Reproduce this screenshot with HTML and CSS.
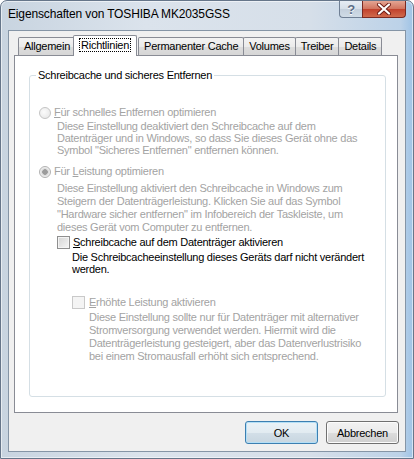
FILE: index.html
```html
<!DOCTYPE html>
<html lang="de">
  <head>
    <meta charset="UTF-8" />
    <meta name="viewport" content="width=device-width, initial-scale=1.0" />
    <title>Eigenschaften von TOSHIBA MK2035GSS</title>

    <link rel="stylesheet" href="styles.css">
  </head>
  <body>
    <div class="window">
      <div class="titlebar">
        <span class="title">Eigenschaften von TOSHIBA MK2035GSS</span>
        <div class="caption-buttons">
          <span class="cap-btn help">?</span>
          <span class="cap-btn close">
            <svg width="16" height="12" viewBox="0 0 16 12">
              <path d="M3 1.5 L13 10.5 M13 1.5 L3 10.5" stroke="#6b1b14" stroke-width="4" stroke-linecap="round" />
              <path d="M3 1.5 L13 10.5 M13 1.5 L3 10.5" stroke="#fff" stroke-width="2.2" stroke-linecap="round" />
            </svg>
          </span>
        </div>
      </div>

      <div class="client">
        <div class="tabs">
          <span class="tab">Allgemein</span>
          <span class="tab active"><span class="focus">Richtlinien</span></span>
          <span class="tab">Permanenter Cache</span>
          <span class="tab">Volumes</span>
          <span class="tab">Treiber</span>
          <span class="tab">Details</span>
        </div>

        <div class="panel">
          <fieldset class="group">
            <legend>Schreibcache und sicheres Entfernen</legend>

            <div class="row disabled row-first">
              <span class="radio"></span>
              <span><u>F</u>ür schnelles Entfernen optimieren</span>
            </div>
            <p class="desc disabled desc-first">
              Diese Einstellung deaktiviert den Schreibcache auf dem<br>
              Datenträger und in Windows, so dass Sie dieses Gerät ohne das<br>
              Symbol "Sicheres Entfernen" entfernen können.
            </p>

            <div class="row disabled row-second">
              <span class="radio checked"></span>
              <span>Für <u>L</u>eistung optimieren</span>
            </div>
            <p class="desc disabled desc-second">
              Diese Einstellung aktiviert den Schreibcache in Windows zum<br>
              Steigern der Datenträgerleistung. Klicken Sie auf das Symbol<br>
              "Hardware sicher entfernen" im Infobereich der Taskleiste, um<br>
              dieses Gerät vom Computer zu entfernen.
            </p>

            <div class="row row-check">
              <span class="check"></span>
              <span><u>S</u>chreibcache auf dem Datenträger aktivieren</span>
            </div>
            <p class="desc desc-check">
              Die Schreibcacheeinstellung dieses Geräts darf nicht verändert<br>
              werden.
            </p>

            <div class="row disabled row-boost">
              <span class="check"></span>
              <span><u>E</u>rhöhte Leistung aktivieren</span>
            </div>
            <p class="desc disabled desc-boost">
              Diese Einstellung sollte nur für Datenträger mit alternativer<br>
              Stromversorgung verwendet werden. Hiermit wird die<br>
              Datenträgerleistung gesteigert, aber das Datenverlustrisiko<br>
              bei einem Stromausfall erhöht sich entsprechend.
            </p>
          </fieldset>
        </div>

        <div class="buttons">
          <button class="btn default">OK</button>
          <button class="btn">Abbrechen</button>
        </div>
      </div>
    </div>
  </body>
</html>
```

FILE: styles.css
```css
html,
body {
  margin: 0;
  padding: 0;
  background: #fff;
}

body {
  font-family: "Liberation Sans", Arial, sans-serif;
  font-size: 11px;
  letter-spacing: -0.25px;
  color: #000;
}

.window {
  width: 414px;
  height: 459px;
  box-sizing: border-box;
  border: 1px solid #66768a;
  border-radius: 7px 7px 0 0;
  padding: 0 7px 6px 7px;
  display: flex;
  flex-direction: column;
  background: linear-gradient(to right, #c8d4e0 0%, #dbe3ec 35%, #d6dfe9 75%, #bcd2e8 97%, #9fc3e6 100%);
  box-shadow: inset 0 0 0 1px rgba(255, 255, 255, 0.55);
}

.titlebar {
  height: 29px;
  display: flex;
  justify-content: space-between;
  align-items: flex-start;
}

.title {
  margin-top: 6px;
  font-size: 12px;
  line-height: 14px;
  letter-spacing: -0.15px;
  color: #000;
}

.caption-buttons {
  display: flex;
}

.cap-btn {
  height: 17px;
  box-sizing: border-box;
  display: flex;
  align-items: center;
  justify-content: center;
  border: 1px solid #6f7f94;
  border-top: none;
}

.help {
  width: 23px;
  border-right: none;
  border-radius: 0 0 0 4px;
  background: linear-gradient(#e6ecf3 0%, #d5dee8 50%, #c3cfdc 51%, #d0dbe6 100%);
  color: #5a6d86;
  font-size: 13px;
  font-weight: bold;
  text-shadow: 0 1px 0 #fff;
}

.close {
  width: 44px;
  border-color: #7a2a22;
  border-radius: 0 0 4px 0;
  background: linear-gradient(#e4a593 0%, #d1735d 50%, #c1412c 51%, #d06a4c 100%);
}

.client {
  flex: 1;
  display: flex;
  flex-direction: column;
  border: 1px solid #8595a6;
  background: #f0f0f0;
}

.tabs {
  height: 24px;
  box-sizing: border-box;
  display: flex;
  align-items: flex-end;
  padding-left: 9px;
}

.tab {
  height: 18px;
  box-sizing: border-box;
  padding: 0 5px;
  line-height: 16px;
  white-space: nowrap;
  border: 1px solid #898c95;
  border-bottom: none;
  border-radius: 2px 2px 0 0;
  margin-right: -1px;
  background: linear-gradient(#f3f3f3 0%, #ebebeb 50%, #dddddd 51%, #d6d6d6 100%);
}

.tab.active {
  position: relative;
  z-index: 1;
  height: 21px;
  margin: 0 1px -1px -2px;
  padding: 0 6px;
  line-height: 18px;
  background: #fff;
}

.focus {
  outline: 1px dotted #000;
  outline-offset: 0;
  padding: 0 1px;
}

.panel {
  flex: 1;
  display: flex;
  flex-direction: column;
  margin: 0 7px 0 5px;
  padding: 13px 11px 15px 14px;
  border: 1px solid #898c95;
  background: #fff;
}

.group {
  flex: 1;
  min-width: 0;
  margin: 0;
  padding: 0 10px 0 9px;
  border: 1px solid #d5dfe5;
  border-radius: 3px;
}

.group legend {
  margin-left: -3px;
  padding: 0 2px;
  line-height: 13px;
}

.row {
  display: flex;
  align-items: center;
  height: 13px;
  line-height: 13px;
  white-space: nowrap;
}

.desc {
  margin: 0;
  line-height: 13px;
  white-space: nowrap;
}

.disabled {
  color: #a3a3a3;
}

.row-first {
  margin-top: 24px;
}

.desc-first {
  margin: 1px 0 0 18px;
  line-height: 12px;
}

.row-second {
  margin-top: 9px;
}

.desc-second {
  margin: 4px 0 0 18px;
}

.row-check {
  margin: 2px 0 0 18px;
}

.desc-check {
  margin: 2px 0 0 33px;
  line-height: 12px;
}

.row-boost {
  margin: 21px 0 0 33px;
}

.desc-boost {
  margin: 2px 0 0 50px;
}

.radio {
  width: 12px;
  height: 12px;
  box-sizing: border-box;
  margin-right: 3px;
  border: 1px solid #c4c4c4;
  border-radius: 50%;
  background: radial-gradient(circle at 40% 40%, #fbfbfb 0%, #e4e4e4 100%);
}

.radio.checked {
  border-color: #b1b1b1;
  background: radial-gradient(circle, #9c9c9c 0 2.5px, #d8d8d8 3px, #f4f4f4 5px);
}

.check {
  width: 13px;
  height: 13px;
  box-sizing: border-box;
  margin-right: 3px;
  border: 1px solid #8f8f8f;
  background: linear-gradient(135deg, #d4d4d4 0%, #f6f6f6 100%);
  box-shadow: inset 0 0 0 1px #f4f4f4;
}

.row-boost .check {
  margin-right: 4px;
  border-color: #c9c9c9;
  background: #f4f4f4;
  box-shadow: none;
}

.buttons {
  display: flex;
  justify-content: flex-end;
  gap: 8px;
  padding: 8px 6px 7px 0;
}

.btn {
  width: 73px;
  height: 23px;
  padding: 0;
  font-family: "Liberation Sans", Arial, sans-serif;
  font-size: 11px;
  letter-spacing: -0.25px;
  color: #000;
  border: 1px solid #707070;
  border-radius: 3px;
  background: linear-gradient(#f2f2f2 0%, #ebebeb 50%, #dddddd 51%, #cfcfcf 100%);
  box-shadow: inset 0 0 0 1px #fcfcfc;
}

.btn.default {
  border-color: #3c7fb1;
  background: linear-gradient(#eaf2f7 0%, #e2ebf1 50%, #d3dfe8 51%, #c8d6e0 100%);
  box-shadow: inset 0 0 0 1px #b4dff6;
}
```
